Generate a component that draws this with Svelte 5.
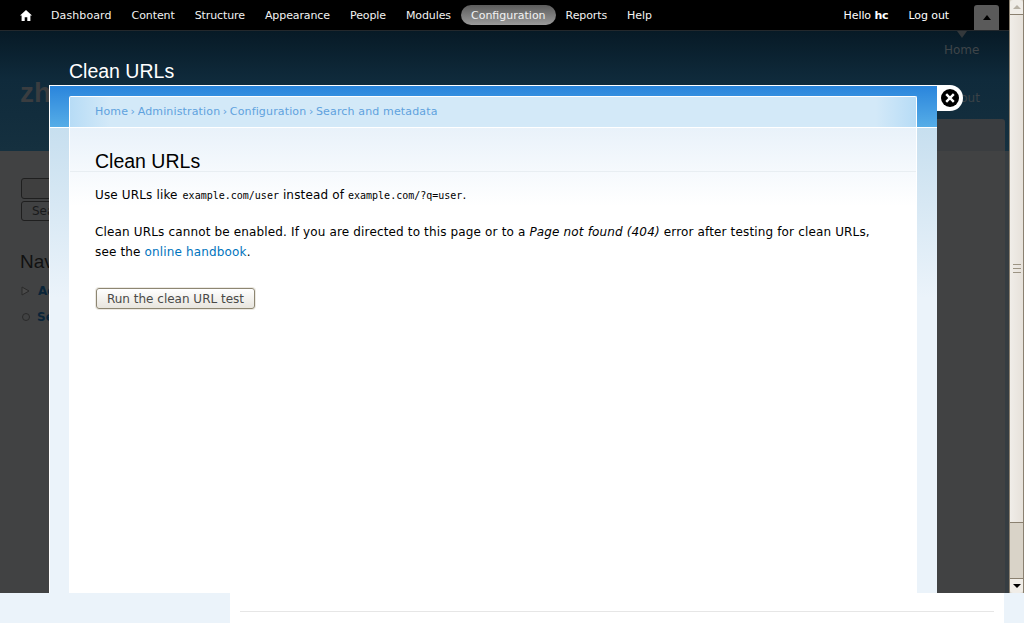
<script lang="ts">
  const menu = ["Dashboard", "Content", "Structure", "Appearance", "People", "Modules", "Configuration", "Reports", "Help"];
  const crumbs = ["Home", "Administration", "Configuration", "Search and metadata"];
</script>

<div class="screen">
  <div class="top">
    <div class="page">
      <nav class="toolbar">
        <svg class="home" width="12" height="11" viewBox="0 0 12 11"><path d="M6 0 L12 5.6 L10.4 5.6 L10.4 11 L7.3 11 L7.3 7.2 L4.7 7.2 L4.7 11 L1.6 11 L1.6 5.6 L0 5.6 Z" fill="#fff" /></svg>
        <ul class="menu">
          {#each menu as item}
            <li class:active={item === "Configuration"}>{item}</li>
          {/each}
        </ul>
        <div class="user">
          <span class="hello">Hello <b>hc</b></span>
          <span>Log out</span>
          <div class="toggle"><i></i></div>
        </div>
      </nav>

      <header class="head">
        <div class="site">zh</div>
        <h2 class="behind-title">Clean URLs</h2>
        <div class="secondary">
          <span class="caret"></span>
          <span>Home</span>
          <span class="logout">Log out</span>
        </div>
        <div class="tabbar"></div>
      </header>

      <main class="dim">
        <div class="search">
          <div class="input"></div>
          <div class="go">Search</div>
        </div>
        <h3>Navigation</h3>
        <ul class="nav">
          <li><svg class="tri" width="9" height="10" viewBox="0 0 9 10"><path d="M1 1 L8 5 L1 9 Z" fill="#4a4a4a" stroke="#2a2a2a" /></svg>Add content</li>
          <li><span class="dot"></span>Search</li>
        </ul>
      </main>

      <section class="modal">
        <div class="tabstrip">
          <div class="crumbs">
            {#each crumbs as c, i}
              {#if i > 0}<span class="sep">›</span>{/if}<span>{c}</span>
            {/each}
          </div>
        </div>
        <div class="sides">
          <article class="content">
            <h1>Clean URLs</h1>
            <p class="first">Use URLs like <code class="nudge">example.com/user</code> instead of <code>example.com/?q=user</code>.</p>
            <p class="second">Clean URLs cannot be enabled. If you are directed to this page or to a <em>Page not found (404)</em> error after testing for clean URLs, see the <a href="#handbook">online handbook</a>.</p>
            <button>Run the clean URL test</button>
          </article>
        </div>
      </section>

      <div class="close">
        <svg width="18" height="18" viewBox="0 0 18 18"><circle cx="9" cy="9" r="9" fill="#000" /><path d="M5.2 5.2 L12.8 12.8 M12.8 5.2 L5.2 12.8" stroke="#fff" stroke-width="2.4" /></svg>
      </div>
    </div>

    <div class="scrollbar">
      <div class="arrow up"><i></i></div>
      <div class="thumb"><div class="grip"></div></div>
      <div class="track"></div>
      <div class="arrow down"><i></i></div>
    </div>
  </div>

  <div class="bottom">
    <div class="sheet"><hr /></div>
  </div>
</div>

<style>
  :global(body) {
    margin: 0;
    overflow: hidden;
    background: #ebf3fa;
  }

  .screen {
    width: 1024px;
    height: 623px;
    overflow: hidden;
    font-family: "DejaVu Sans", sans-serif;
  }

  .top {
    display: flex;
    height: 593px;
  }

  .page {
    position: relative;
    width: 1009px;
    display: flex;
    flex-direction: column;
    overflow: hidden;
  }

  .toolbar {
    display: flex;
    align-items: center;
    height: 30px;
    flex: none;
    background: #000;
    border-bottom: 1px solid #23282c;
    color: #fff;
    font-size: 11px;
    letter-spacing: -0.1px;
    padding-left: 20px;
    position: relative;
    z-index: 3;
  }

  .home {
    margin-right: 9px;
  }

  .menu {
    display: flex;
    align-items: center;
    list-style: none;
    margin: 0;
    padding: 0;
  }

  .menu li {
    padding: 1px 10px 0;
    line-height: 19px;
    color: #f2f2f2;
  }

  .menu li:first-child {
    letter-spacing: 0.1px;
  }

  .menu li.active {
    background: linear-gradient(#5c5c5c, #9a9a9a);
    border-radius: 10px;
    letter-spacing: 0;
  }

  .user {
    margin-left: auto;
    display: flex;
    align-items: center;
    padding-right: 10px;
    height: 30px;
    padding-top: 1px;
    box-sizing: border-box;
  }

  .hello {
    margin-right: 20px;
  }

  .user b {
    font-weight: bold;
  }

  .toggle {
    width: 25px;
    height: 25px;
    margin-top: 4px;
    margin-left: 25px;
    background: #5a5a5a;
    border-radius: 3px 3px 0 0;
    display: flex;
    align-items: center;
    justify-content: center;
  }

  .toggle i {
    border: 4px solid transparent;
    border-top: 0;
    border-bottom: 5px solid #000;
  }

  .head {
    position: relative;
    height: 120px;
    flex: none;
    background: linear-gradient(#071a26, #0f2a3b 40%, #15303f);
  }

  .site {
    position: absolute;
    left: 20px;
    top: 46px;
    font: bold 28px "Liberation Sans", sans-serif;
    color: #3a3d40;
  }

  .behind-title {
    position: absolute;
    left: 69px;
    top: 29px;
    margin: 0;
    font: normal 19.5px "Liberation Sans", sans-serif;
    color: #fff;
  }

  .secondary {
    position: absolute;
    left: 944px;
    top: 0;
    font-size: 12px;
    color: #3f4549;
  }

  .secondary span {
    position: absolute;
    white-space: nowrap;
  }

  .secondary span:nth-child(2) {
    top: 12px;
  }

  .caret {
    left: 13px;
    top: 0;
    border: 5px solid transparent;
    border-bottom: 0;
    border-top: 7px solid #33383b;
  }

  .logout {
    left: -9px;
    top: 60px;
    color: #3a4247;
  }

  .tabbar {
    position: absolute;
    left: 880px;
    width: 125px;
    top: 88px;
    height: 32px;
    background: #3a3d40;
    border-radius: 3px 3px 0 0;
  }

  .dim {
    flex: 1;
    background: #414243;
    border-right: 4px solid #363d42;
    padding: 27px 20px;
    color: #191a1b;
    font-size: 12px;
    overflow: hidden;
  }

  .search {
    width: 200px;
    margin-left: 1px;
  }

  .input {
    height: 19px;
    border: 1px solid #1f1f1f;
    border-radius: 3px;
    background: #3f3f3f;
  }

  .go {
    margin-top: 2px;
    width: 60px;
    height: 18px;
    border: 1px solid #1f1f1f;
    border-radius: 3px;
    padding-left: 10px;
    line-height: 18px;
  }

  .dim h3 {
    margin: 30px 0 0;
    font: normal 19px "Liberation Sans", sans-serif;
    color: #111;
  }

  .nav {
    list-style: none;
    margin: 5px 0 0;
    padding: 0;
    font-weight: bold;
    color: #0a2438;
  }

  .nav li {
    display: flex;
    align-items: center;
    height: 26px;
  }

  .tri {
    margin: 0 8px 0 1px;
  }

  .dot {
    width: 6px;
    height: 6px;
    margin: 0 7px 0 2px;
    border: 1px solid #2a2a2a;
    border-radius: 50%;
  }

  /* overlay sits on top of the dimmed page */
  .modal {
    position: absolute;
    left: 49px;
    top: 85px;
    width: 888px;
    bottom: 0;
    box-sizing: border-box;
    border-left: 1px solid #fff;
    border-top: 1px solid #fff;
    display: flex;
    flex-direction: column;
    z-index: 1;
  }

  .tabstrip {
    flex: none;
    height: 31px;
    padding: 10px 20px 0 19px;
    background: linear-gradient(#2a85dc, #56ade7);
    border-bottom: 1px solid #fff;
  }

  .crumbs {
    display: flex;
    height: 31px;
    box-sizing: border-box;
    padding: 8px 0 0 25px;
    border-top: 1px solid #fff;
    border-left: 1px solid #fff;
    border-right: 1px solid #fff;
    border-top-left-radius: 2px;
    border-top-right-radius: 2px;
    font-size: 11px;
    letter-spacing: 0.15px;
    color: #5fa2de;
    background:
      linear-gradient(90deg, #b7dcf6, #d3e9f8 40px, #d3e9f8 calc(100% - 40px), #b7dcf6);
    white-space: pre;
  }

  .sep {
    margin: 0 2.5px;
  }

  .sides {
    flex: 1;
    padding: 0 20px 0 19px;
    background: linear-gradient(#c7dfef, #ebf3fa 170px);
    display: flex;
  }

  .content {
    flex: 1;
    background: linear-gradient(#e9f2fa, #fff 78px);
    border-left: 1px solid #fff;
    border-right: 1px solid #fff;
    padding: 0 25px;
    font-size: 12px;
    letter-spacing: 0.15px;
    color: #000;
    position: relative;
  }

  .content h1 {
    margin: 0 -25px;
    height: 44px;
    box-sizing: border-box;
    padding: 23px 0 0 25px;
    border-bottom: 1px solid #e8eef2;
    font: normal 19.5px/20px "Liberation Sans", sans-serif;
    letter-spacing: 0;
  }

  p {
    margin: 0;
    line-height: 20px;
    width: 790px;
  }

  .first {
    margin-top: 13px;
  }

  .second {
    margin-top: 16px;
  }

  code {
    font-family: "DejaVu Sans Mono", monospace;
    font-size: 10px;
    letter-spacing: 0;
  }

  .nudge {
    margin-left: 1px;
  }

  a {
    color: #0074bd;
    text-decoration: none;
  }

  button {
    display: block;
    margin: 26px 0 0 1px;
    width: 159px;
    height: 21px;
    padding: 0;
    border: 1px solid #8d8672;
    border-radius: 3px;
    background: linear-gradient(#fff, #e8e5de);
    box-shadow: 0 0 0 1px #ece9e3;
    font: 12px "DejaVu Sans", sans-serif;
    color: #4a4a48;
  }

  .close {
    position: absolute;
    left: 937px;
    top: 85px;
    width: 26px;
    height: 26px;
    background: #fff;
    border-radius: 0 13px 13px 0;
    display: flex;
    align-items: center;
    justify-content: center;
    z-index: 2;
  }

  .scrollbar {
    width: 15px;
    display: flex;
    flex-direction: column;
    background: #d9d3c8;
    border-left: 1px solid #8a8070;
    border-right: 1px solid #8a8070;
    box-sizing: border-box;
  }

  .arrow {
    height: 14px;
    flex: none;
    background: #f0ede8;
    display: flex;
    align-items: center;
    justify-content: center;
  }

  .arrow.up {
    border-radius: 3px 3px 0 0;
  }

  .arrow.down {
    border-top: 1px solid #8a8070;
    border-radius: 0 0 3px 3px;
  }

  .arrow.up i {
    border: 4px solid transparent;
    border-top: 0;
    border-bottom: 4px solid #b8b2a6;
  }

  .arrow.down i {
    border: 4px solid transparent;
    border-bottom: 0;
    border-top: 4px solid #000;
  }

  .thumb {
    height: 507px;
    flex: none;
    background: linear-gradient(90deg, #f0ede8, #e6e1da);
    border-top: 1px solid #8a8070;
    border-bottom: 1px solid #8a8070;
    display: flex;
    align-items: center;
    justify-content: center;
  }

  .grip {
    width: 8px;
    height: 7px;
    border-top: 1px solid #9c9484;
    border-bottom: 1px solid #9c9484;
    background: linear-gradient(#9c9484, #9c9484) center / 100% 1px no-repeat;
  }

  .track {
    flex: 1;
  }

  .bottom {
    height: 30px;
    padding: 0 20px 0 230px;
    background: #ebf3fa;
  }

  .sheet {
    background: #fff;
    height: 30px;
    padding: 18px 10px 0;
    box-sizing: border-box;
  }

  hr {
    margin: 0;
    border: 0;
    border-top: 1px solid #e6e6e6;
  }
</style>
